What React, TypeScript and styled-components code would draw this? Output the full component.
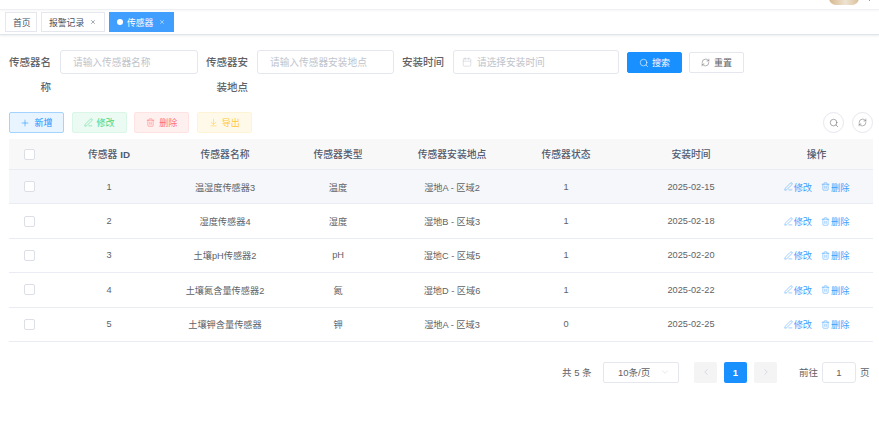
import React from 'react';
import styled, { createGlobalStyle } from 'styled-components';
import { Search, RefreshCw, Plus, PenLine, Trash2, ArrowDownToLine, Calendar, ChevronLeft, ChevronRight, ChevronDown, X } from 'lucide-react';

const Global = createGlobalStyle`
  html, body { margin: 0; padding: 0; background: #fff; }
  body { font-family: "Liberation Sans", "Noto Sans CJK SC", sans-serif; color: #606266; overflow: hidden; }
  * { box-sizing: border-box; }
`;

const Page = styled.div`
  width: 879px;
  height: 423px;
  display: flex;
  flex-direction: column;
  overflow: hidden;
`;
const TopBar = styled.div`
  height: 10px;
  flex: none;
  display: flex;
  justify-content: flex-end;
  align-items: flex-end;
  gap: 10px;
  padding-right: 9px;
  border-bottom: 1px solid #f0f1f4;
  box-shadow: 0 1px 2px rgba(0, 21, 41, 0.04);
`;
const Avatar = styled.div`
  width: 30px;
  height: 15px;
  margin-bottom: 4px;
  border-radius: 7px;
  background: linear-gradient(90deg, #d6b88e, #efe3d0 55%, #d9c09c);
`;
const Caret = styled.div`
  width: 1px;
  height: 2px;
  margin-bottom: 8px;
  background: #999;
`;
const TagBar = styled.div`
  height: 25px;
  flex: none;
  display: flex;
  align-items: center;
  gap: 4px;
  padding: 0 5px;
  border-bottom: 1px solid #dfe3ec;
  box-shadow: 0 1px 2px rgba(0, 21, 41, 0.08);
`;
const Tag = styled.div<{ $active?: boolean; $w: number }>`
  width: ${p => p.$w}px;
  height: 20px;
  display: flex;
  align-items: center;
  gap: ${p => (p.$active ? 4 : 5)}px;
  padding-left: 7px;
  font-size: 8.8px;
  border: 1px solid ${p => (p.$active ? '#409eff' : '#e4e7ed')};
  background: ${p => (p.$active ? '#409eff' : '#fff')};
  color: ${p => (p.$active ? '#fff' : '#495060')};
`;
const Dot = styled.span`
  width: 6px;
  height: 6px;
  border-radius: 50%;
  background: #fff;
`;
const Close = styled(X)<{ $shift?: number }>`
  margin-left: ${p => p.$shift ?? 0}px;
`;
const Body = styled.div`
  padding: 15px 6px 0 9px;
  display: flex;
  flex-direction: column;
`;
const FilterRow = styled.div`
  display: flex;
  align-items: flex-start;
  height: 62px;
`;
const FieldLabel = styled.label`
  width: 42px;
  flex: none;
  font-size: 10.5px;
  font-weight: 500;
  line-height: 25px;
  text-align: right;
  color: #606266;
  margin-right: 9px;
`;
const InputBox = styled.div<{ $w: number; $gap: number }>`
  width: ${p => p.$w}px;
  height: 24px;
  flex: none;
  margin-right: ${p => p.$gap}px;
  border: 1px solid #e4e7ed;
  border-radius: 3px;
  display: flex;
  align-items: center;
  gap: 5px;
  padding-left: 12px;
  font-size: 9.7px;
  color: #c0c4cc;
  background: #fff;
  svg { margin-left: -4px; }
`;
const SearchBtn = styled.button`
  width: 55px;
  height: 21px;
  margin-top: 2px;
  margin-right: 7px;
  border: 1px solid #1890ff;
  border-radius: 2px;
  background: #1890ff;
  color: #fff;
  font: inherit;
  font-size: 9px;
  display: flex;
  align-items: center;
  justify-content: center;
  gap: 3px;
  padding: 0;
`;
const ResetBtn = styled(SearchBtn)`
  background: #fff;
  border-color: #e4e7ed;
  color: #606266;
  gap: 4px;
`;
const ActionRow = styled.div`
  display: flex;
  align-items: center;
  height: 21px;
`;
const Tone = {
  blue: ['#e8f4ff', '#a3d3ff', '#1890ff'],
  green: ['#e7faf0', '#d0f5e0', '#13ce66'],
  red: ['#ffeded', '#ffdbdb', '#ff4949'],
  yellow: ['#fff8e6', '#fff1cc', '#ffba00'],
} as const;
const ActionBtn = styled.button<{ $tone: keyof typeof Tone }>`
  width: 55px;
  height: 21px;
  margin-right: 7.6px;
  border-radius: 2px;
  border: 1px solid ${p => Tone[p.$tone][1]};
  background: ${p => Tone[p.$tone][0]};
  color: ${p => Tone[p.$tone][2]};
  opacity: ${p => (p.$tone === 'blue' ? 1 : 0.8)};
  font: inherit;
  font-size: 9px;
  display: flex;
  align-items: center;
  justify-content: center;
  gap: 4px;
  padding: 0;
`;
const Spacer = styled.div`
  flex: 1;
`;
const CircleBtn = styled.button`
  width: 21px;
  height: 21px;
  margin-left: 8px;
  border: 1px solid #e4e7ed;
  border-radius: 50%;
  background: #fff;
  color: #606266;
  display: flex;
  align-items: center;
  justify-content: center;
  padding: 0;
`;
const cols = '41px 118px 114px 112px 116px 112px 138px 113px';
const HeadRow = styled.div`
  display: grid;
  grid-template-columns: ${cols};
  height: 31px;
  margin-top: 6px;
  background: #f8f8f9;
  border-bottom: 1px solid #e9ecf2;
  align-items: center;
  text-align: center;
  font-size: 9.8px;
  font-weight: 500;
  color: #515a6e;
`;
const Latin = styled.b`
  font-weight: 700;
`;
const Row = styled.div<{ $hover?: boolean }>`
  display: grid;
  grid-template-columns: ${cols};
  height: 34.4px;
  background: ${p => (p.$hover ? '#f5f7fa' : '#fff')};
  border-bottom: 1px solid #e9ecf2;
  align-items: center;
  text-align: center;
  font-size: 9.2px;
  color: #606266;
`;
const Box = styled.span`
  display: block;
  width: 11px;
  height: 11px;
  margin-left: 15px;
  border: 1px solid #dcdfe6;
  border-radius: 2px;
  background: #fff;
`;
const Ops = styled.div`
  display: flex;
  justify-content: center;
  gap: 9px;
  white-space: nowrap;
`;
const Op = styled.span`
  display: inline-flex;
  align-items: center;
  gap: 1px;
  color: #1890ff;
  opacity: 0.85;
`;
const Pager = styled.div`
  display: flex;
  align-items: center;
  height: 21px;
  margin-top: 20px;
  font-size: 9.5px;
  color: #606266;
  padding-left: 553px;
`;
const Total = styled.span`
  width: 41px;
  flex: none;
  white-space: nowrap;
`;
const Select = styled.div`
  width: 76px;
  height: 21px;
  flex: none;
  margin-right: 15px;
  border: 1px solid #e4e7ed;
  border-radius: 2px;
  display: flex;
  align-items: center;
  justify-content: space-between;
  padding: 0 8px 0 14px;
`;
const PageBtn = styled.div<{ $on?: boolean }>`
  width: 23px;
  height: 21px;
  flex: none;
  margin-right: 7px;
  border-radius: 2px;
  background: ${p => (p.$on ? '#1890ff' : '#f4f4f5')};
  color: ${p => (p.$on ? '#fff' : '#c0c4cc')};
  font-weight: 700;
  font-size: 9.5px;
  display: flex;
  align-items: center;
  justify-content: center;
`;
const Goto = styled.span`
  margin-left: 15px;
  margin-right: 4px;
  white-space: nowrap;
`;
const PageInput = styled.div`
  width: 34px;
  height: 21px;
  flex: none;
  margin-right: 4px;
  border: 1px solid #e4e7ed;
  border-radius: 3px;
  display: flex;
  align-items: center;
  justify-content: center;
`;

const data = [
  [1, '温湿度传感器3', '温度', '湿地A - 区域2', 1, '2025-02-15'],
  [2, '湿度传感器4', '湿度', '湿地B - 区域3', 1, '2025-02-18'],
  [3, '土壤pH传感器2', 'pH', '湿地C - 区域5', 1, '2025-02-20'],
  [4, '土壤氮含量传感器2', '氮', '湿地D - 区域6', 1, '2025-02-22'],
  [5, '土壤钾含量传感器', '钾', '湿地A - 区域3', 0, '2025-02-25'],
];

export default function App() {
  return (
    <Page>
      <Global />
      <TopBar><Avatar /><Caret /></TopBar>
      <TagBar>
        <Tag $w={32}>首页</Tag>
        <Tag $w={64}>报警记录<Close size={6} $shift={1} /></Tag>
        <Tag $w={65} $active><Dot />传感器<Close size={6} $shift={2} /></Tag>
      </TagBar>
      <Body>
        <FilterRow>
          <FieldLabel>传感器名称</FieldLabel>
          <InputBox $w={138} $gap={8}>请输入传感器名称</InputBox>
          <FieldLabel>传感器安装地点</FieldLabel>
          <InputBox $w={137} $gap={8}>请输入传感器安装地点</InputBox>
          <FieldLabel>安装时间</FieldLabel>
          <InputBox $w={166} $gap={8}><Calendar size={10} strokeWidth={1.2} />请选择安装时间</InputBox>
          <SearchBtn><Search size={10} strokeWidth={1.4} />搜索</SearchBtn>
          <ResetBtn><RefreshCw size={9} strokeWidth={1.3} />重置</ResetBtn>
        </FilterRow>
        <ActionRow>
          <ActionBtn $tone="blue"><Plus size={10} strokeWidth={1.3} />新增</ActionBtn>
          <ActionBtn $tone="green"><PenLine size={9} strokeWidth={1.3} />修改</ActionBtn>
          <ActionBtn $tone="red"><Trash2 size={9} strokeWidth={1.3} />删除</ActionBtn>
          <ActionBtn $tone="yellow"><ArrowDownToLine size={9} strokeWidth={1.3} />导出</ActionBtn>
          <Spacer />
          <CircleBtn><Search size={10} strokeWidth={1.3} /></CircleBtn>
          <CircleBtn><RefreshCw size={9} strokeWidth={1.3} /></CircleBtn>
        </ActionRow>
        <HeadRow>
          <Box />
          <span>传感器 <Latin>ID</Latin></span>
          <span>传感器名称</span>
          <span>传感器类型</span>
          <span>传感器安装地点</span>
          <span>传感器状态</span>
          <span>安装时间</span>
          <span>操作</span>
        </HeadRow>
        {data.map((d, i) => (
          <Row key={i} $hover={i === 0}>
            <Box />
            {d.map((c, j) => <span key={j}>{c}</span>)}
            <Ops>
              <Op><PenLine size={9} strokeWidth={1.3} />修改</Op>
              <Op><Trash2 size={9} strokeWidth={1.3} />删除</Op>
            </Ops>
          </Row>
        ))}
        <Pager>
          <Total>共 5 条</Total>
          <Select>10条/页<ChevronDown size={10} strokeWidth={1} color="#c0c4cc" /></Select>
          <PageBtn><ChevronLeft size={10} strokeWidth={1.3} /></PageBtn>
          <PageBtn $on>1</PageBtn>
          <PageBtn><ChevronRight size={10} strokeWidth={1.3} /></PageBtn>
          <Goto>前往</Goto>
          <PageInput>1</PageInput>
          <span>页</span>
        </Pager>
      </Body>
    </Page>
  );
}
